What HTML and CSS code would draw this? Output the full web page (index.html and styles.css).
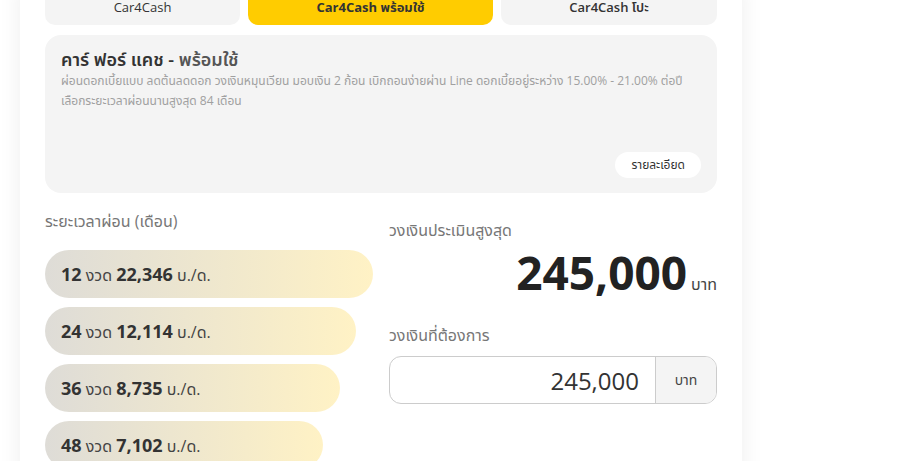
FILE: index.html
```html
<!DOCTYPE html>
<html lang="th">
<head>
<meta charset="utf-8">
<link rel="stylesheet" href="styles.css">
</head>
<body>
<div class="card">
  <div class="tabs">
    <div class="tab">Car4Cash</div>
    <div class="tab active">Car4Cash พร้อมใช้</div>
    <div class="tab semi">Car4Cash โปะ</div>
  </div>
  <div class="info">
    <h2 class="info-title">คาร์ ฟอร์ แคช - <span class="sub">พร้อมใช้</span></h2>
    <p class="info-desc">ผ่อนดอกเบี้ยแบบ ลดต้นลดดอก วงเงินหมุนเวียน มอบเงิน 2 ก้อน เบิกถอนง่ายผ่าน Line ดอกเบี้ยอยู่ระหว่าง 15.00% - 21.00% ต่อปี<br>เลือกระยะเวลาผ่อนนานสูงสุด 84 เดือน</p>
    <div class="info-foot"><button class="detail-btn">รายละเอียด</button></div>
  </div>
  <div class="calc">
    <div class="col-left">
      <div class="label">ระยะเวลาผ่อน (เดือน)</div>
      <div class="plans">
        <div class="plan" style="width:328px"><b>12</b> งวด <b>22,346</b> บ./ด.</div>
        <div class="plan" style="width:311px"><b>24</b> งวด <b>12,114</b> บ./ด.</div>
        <div class="plan" style="width:295px"><b>36</b> งวด <b>8,735</b> บ./ด.</div>
        <div class="plan" style="width:278px"><b>48</b> งวด <b>7,102</b> บ./ด.</div>
      </div>
    </div>
    <div class="col-right">
      <div class="label label-max">วงเงินประเมินสูงสุด</div>
      <div class="max-amount"><span class="big">245,000</span><span class="unit">บาท</span></div>
      <div class="label label-want">วงเงินที่ต้องการ</div>
      <div class="input-group">
        <div class="input-value">245,000</div>
        <div class="addon">บาท</div>
      </div>
    </div>
  </div>
</div>
</body>
</html>
```

FILE: styles.css
```css
* { box-sizing: border-box; }
html, body { margin: 0; padding: 0; background: #fff; }
body {
  font-family: "Open Sans", "Noto Sans", "Noto Sans Thai", "DejaVu Sans", sans-serif;
  color: #333;
  overflow: hidden;
  height: 461px;
}
.card {
  width: 722px;
  margin-left: 20px;
  margin-top: -15px;
  padding: 0 25px 30px;
  background: #fff;
  box-shadow: 0 0 22px rgba(0,0,0,0.07);
  min-height: 520px;
}
.tabs {
  display: grid;
  grid-template-columns: 195px 245px 216px;
  gap: 8px;
}
.tab {
  height: 40px;
  padding-top: 14px;
  text-align: center;
  font-size: 13px;
  line-height: 16px;
  background: #f4f4f4;
  border-radius: 0 0 10px 10px;
  color: #333;
}
.tab.active { background: #ffcc00; font-weight: 700; }
.tab.semi { font-weight: 600; }
.info {
  margin-top: 10px;
  background: #f4f4f4;
  border-radius: 16px;
  padding: 12px 16px 15px;
  height: 158px;
  display: flex;
  flex-direction: column;
}
.info-title {
  margin: 0;
  font-size: 18px;
  line-height: 24px;
  font-weight: 600;
  color: #333;
}
.info-title .sub { color: #555; }
.info-desc {
  margin: 0;
  font-size: 12px;
  line-height: 20px;
  color: #a0a0a0;
}
.info-foot {
  margin-top: auto;
  display: flex;
  justify-content: flex-end;
}
.detail-btn {
  font-family: inherit;
  border: none;
  background: #fff;
  border-radius: 13px;
  height: 26px;
  padding: 0 16px;
  font-size: 12px;
  color: #333;
}
.calc {
  margin-top: 16px;
  display: grid;
  grid-template-columns: 328px 328px;
  gap: 16px;
}
.label {
  font-size: 16px;
  line-height: 24px;
  color: #777;
}
.plans {
  margin-top: 17px;
  display: flex;
  flex-direction: column;
  gap: 9px;
}
.plan {
  height: 48px;
  border-radius: 24px;
  padding-left: 16px;
  line-height: 48px;
  font-size: 16px;
  color: #444;
  background: linear-gradient(90deg, #dedcd7 0%, #fff2c5 100%);
  white-space: nowrap;
}
.plan b { font-size: 18px; font-weight: 700; color: #333; }
.label-max { margin-top: 9px; }
.max-amount {
  display: flex;
  justify-content: flex-end;
  align-items: baseline;
  gap: 4px;
  margin-top: 1px;
}
.big {
  font-size: 46px;
  line-height: 58px;
  font-weight: 700;
  color: #222;
}
.unit { font-size: 16px; color: #444; }
.label-want { margin-top: 22px; }
.input-group {
  margin-top: 9px;
  display: flex;
  height: 48px;
  border: 1px solid #ccc;
  border-radius: 12px;
  overflow: hidden;
}
.input-value {
  flex: 1;
  display: flex;
  align-items: center;
  justify-content: flex-end;
  padding-right: 16px;
  font-size: 24px;
  font-weight: 500;
  color: #333;
}
.addon {
  width: 61px;
  border-left: 1px solid #ccc;
  background: #f4f4f4;
  display: flex;
  align-items: center;
  justify-content: center;
  font-size: 14px;
  color: #444;
}
```
